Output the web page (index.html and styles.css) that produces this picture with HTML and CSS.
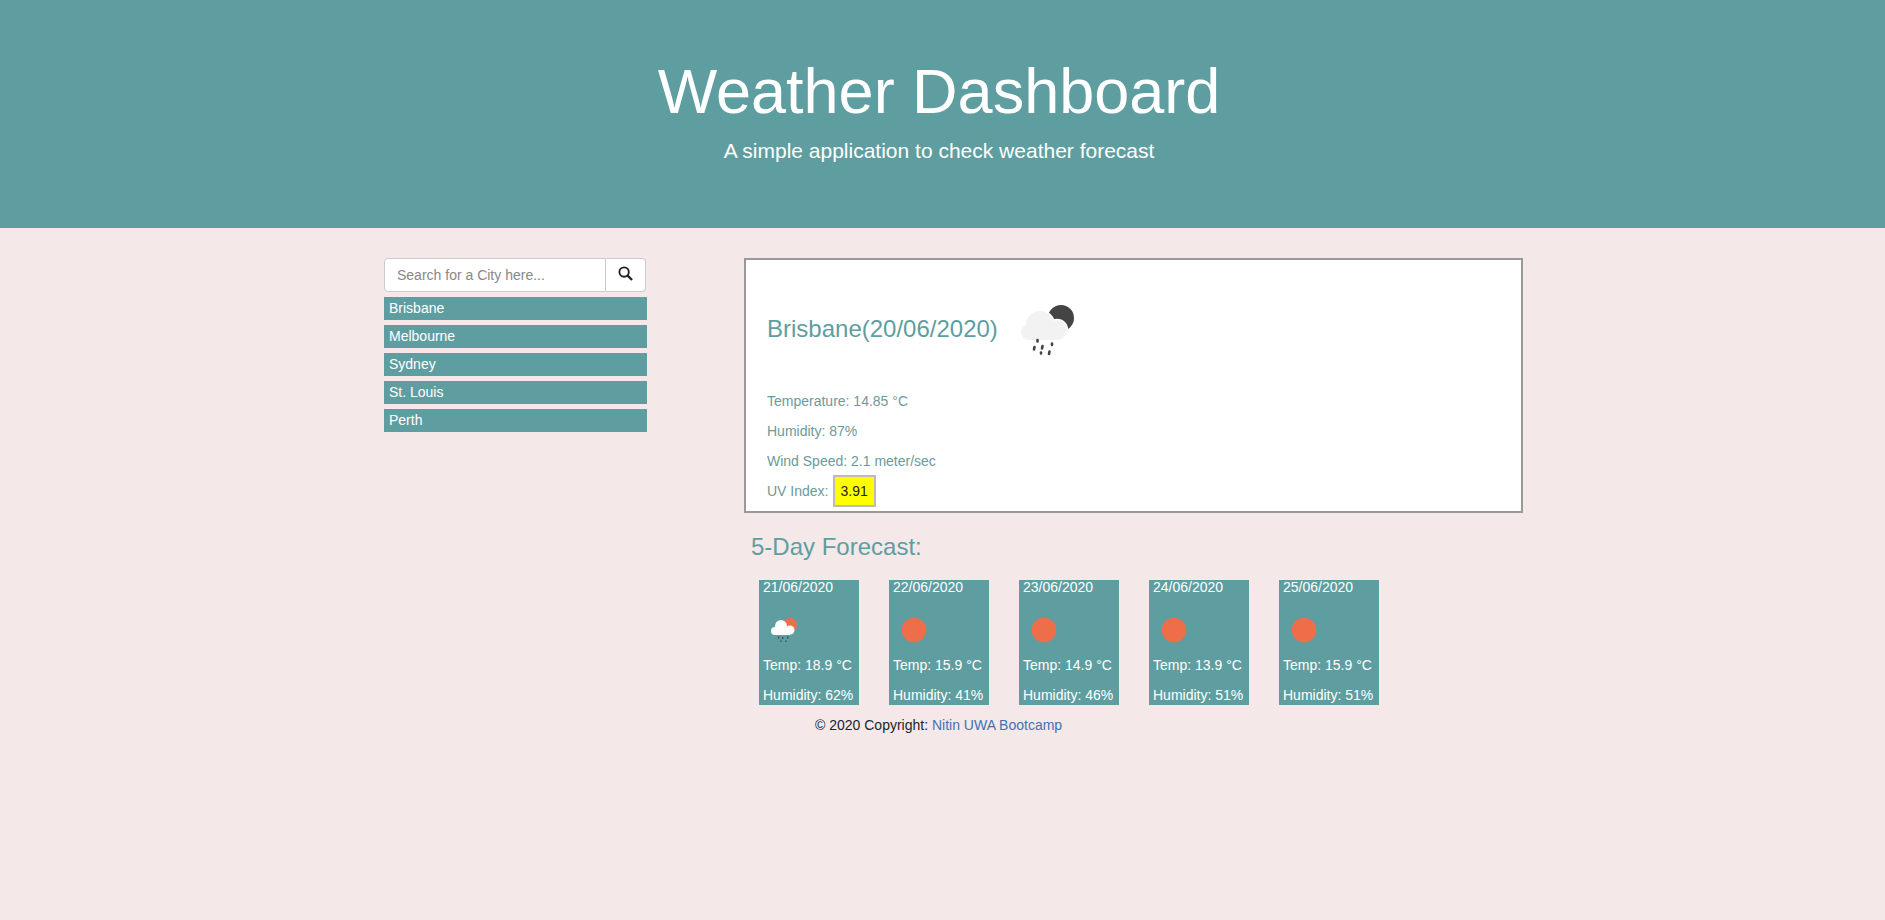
FILE: index.html
```html
<!DOCTYPE html>
<html>
<head>
	<meta charset="utf-8">
	<title>Weather Dashboard</title>
	<link rel="stylesheet" href="styles.css">
</head>
<body>
	<header class="hero">
		<h1>Weather Dashboard</h1>
		<p>A simple application to check weather forecast</p>
	</header>
	<div class="page">
		<aside class="side">
			<div class="search">
				<input type="text" placeholder="Search for a City here...">
				<button><svg width="15" height="15" viewBox="0 0 16 16"><circle cx="6.5" cy="6.5" r="5" fill="none" stroke="#222" stroke-width="2"/><path d="M10.300 10.300L15 15" stroke="#222" stroke-width="2.400"/></svg></button>
			</div>
			<ul class="cities">
				<li>Brisbane</li>
				<li>Melbourne</li>
				<li>Sydney</li>
				<li>St. Louis</li>
				<li>Perth</li>
			</ul>
		</aside>
		<main class="main">
			<section class="today">
				<div class="today-head">
					<h2>Brisbane(20/06/2020)</h2>
					<svg class="big-icon" width="70" height="70" viewBox="0 0 70 70">
						<circle cx="47" cy="22" r="13" fill="#444"/>
						<g fill="#fff" stroke="#fff" stroke-width="2.500">
							<circle cx="26" cy="29" r="14"/>
							<circle cx="43" cy="34" r="10"/>
							<circle cx="15" cy="36" r="8"/>
						</g>
						<g fill="#f2f2f2">
							<circle cx="26" cy="29" r="14"/>
							<circle cx="43" cy="34" r="10"/>
							<circle cx="15" cy="36" r="8"/>
							<rect x="15" y="33" width="28" height="11"/>
						</g>
						<path d="M23.500 44v1.500M20.500 51l-.5 2.500M28.500 50l-.5 2.500M38 47.500v1.500M27 56.500v1M35.500 55.500l-.5 2.500" stroke="#444" stroke-width="2.600" stroke-linecap="round"/>
					</svg>
				</div>
				<p>Temperature: 14.85 °C</p>
				<p>Humidity: 87%</p>
				<p>Wind Speed: 2.1 meter/sec</p>
				<p class="uv">UV Index: <span class="uv-val">3.91</span></p>
			</section>
			<h3 class="five">5-Day Forecast:</h3>
			<div class="cards">
				<div class="card">
					<div class="date">21/06/2020</div>
					<svg class="icon" width="34" height="34" viewBox="0 0 34 34">
						<circle cx="23" cy="11" r="7" fill="#ee6e4a"/>
						<g fill="#fff">
							<circle cx="14" cy="12" r="6"/>
							<circle cx="23" cy="16" r="4.500"/>
							<circle cx="8" cy="17" r="4"/>
							<rect x="8" y="15" width="15" height="6"/>
						</g>
						<path d="M12 22.500l-.5 2M16 23l-.5 2M21 22.500l-.5 2M14 26.500v1.500M19 26.500v1.500" stroke="#444" stroke-width="1.200"/>
					</svg>
					<div class="row">Temp: 18.9 °C</div>
					<div class="row">Humidity: 62%</div>
				</div>
				<div class="card">
					<div class="date">22/06/2020</div>
					<svg class="icon" width="34" height="34" viewBox="0 0 34 34"><circle cx="17" cy="16" r="12.300" fill="#ee6e4a"/></svg>
					<div class="row">Temp: 15.9 °C</div>
					<div class="row">Humidity: 41%</div>
				</div>
				<div class="card">
					<div class="date">23/06/2020</div>
					<svg class="icon" width="34" height="34" viewBox="0 0 34 34"><circle cx="17" cy="16" r="12.300" fill="#ee6e4a"/></svg>
					<div class="row">Temp: 14.9 °C</div>
					<div class="row">Humidity: 46%</div>
				</div>
				<div class="card">
					<div class="date">24/06/2020</div>
					<svg class="icon" width="34" height="34" viewBox="0 0 34 34"><circle cx="17" cy="16" r="12.300" fill="#ee6e4a"/></svg>
					<div class="row">Temp: 13.9 °C</div>
					<div class="row">Humidity: 51%</div>
				</div>
				<div class="card">
					<div class="date">25/06/2020</div>
					<svg class="icon" width="34" height="34" viewBox="0 0 34 34"><circle cx="17" cy="16" r="12.300" fill="#ee6e4a"/></svg>
					<div class="row">Temp: 15.9 °C</div>
					<div class="row">Humidity: 51%</div>
				</div>
			</div>
			<footer class="foot">© 2020 Copyright: <a href="#">Nitin UWA Bootcamp</a></footer>
		</main>
	</div>
</body>
</html>
```

FILE: styles.css
```css
* {
	box-sizing: border-box;
}
body {
	margin: 0;
	height: 920px;
	overflow: hidden;
	background-color: #f4e8e8;
	font-family: "Liberation Sans", Arial, sans-serif;
	font-size: 14px;
	color: #5f9ea0;
}
.hero {
	height: 228px;
	background-color: #5f9ea0;
	color: #fff;
	text-align: center;
	padding: 49px 7px 0 0;
}
.hero h1 {
	margin: 0;
	font-size: 63px;
	font-weight: 400;
	line-height: 84px;
}
.hero p {
	margin: 3px 0 0;
	font-size: 21px;
	line-height: 30px;
}
.page {
	display: flex;
	padding: 30px 0 0 384px;
}
.side {
	width: 263px;
	margin-right: 97px;
}
.search {
	display: flex;
	width: 262px;
	height: 34px;
}
.search input {
	flex: 1;
	min-width: 0;
	border: 1px solid #ccc;
	border-radius: 4px 0 0 4px;
	padding: 0 12px;
	font: 14px "Liberation Sans", Arial, sans-serif;
}
.search input::placeholder {
	color: #888;
}
.search button {
	width: 40px;
	border: 1px solid #ccc;
	border-left: 0;
	border-radius: 0 4px 4px 0;
	background: #fff;
	padding: 0;
}
.cities {
	list-style: none;
	margin: 5px 0 0;
	padding: 0;
}
.cities li {
	height: 23px;
	line-height: 23px;
	margin-bottom: 5px;
	padding-left: 5px;
	background-color: #5f9ea0;
	color: #fff;
}
.main {
	width: 779px;
}
.today {
	height: 255px;
	border: 2px solid #999;
	background-color: #fff;
	padding: 0 0 0 21px;
}
.today-head {
	display: flex;
	align-items: center;
	gap: 16px;
	height: 100px;
	padding-top: 38px;
	margin-bottom: 26px;
}
.today-head h2 {
	margin: 0;
	font-size: 24px;
	font-weight: 400;
}
.big-icon {
	margin-top: 4px;
}
.today p {
	margin: 0;
	height: 30px;
	line-height: 30px;
	color: #6b9a9b;
}
.today .uv {
	display: flex;
	align-items: center;
	gap: 5px;
}
.uv-val {
	flex: none;
	padding: 0 6px 0 5px;
	height: 32px;
	line-height: 28px;
	border: 2px solid #bbb;
	background-color: #ff0;
	color: #222;
}
.five {
	margin: 20px 0 0 7px;
	font-size: 24px;
	font-weight: 400;
	line-height: 28px;
}
.cards {
	display: flex;
	gap: 30px;
	margin: 19px 0 0 15px;
}
.card {
	width: 100px;
	height: 125px;
	padding-left: 4px;
	background-color: #5f9ea0;
	color: #fff;
}
.date {
	line-height: 14px;
}
.icon {
	display: block;
	margin: 20px 0 2px 4px;
}
.row {
	height: 30px;
	line-height: 30px;
}
.foot {
	margin: 11px 0 0 71px;
	color: #212529;
	line-height: 18px;
}
.foot a {
	color: #4273b3;
	text-decoration: none;
}
```
